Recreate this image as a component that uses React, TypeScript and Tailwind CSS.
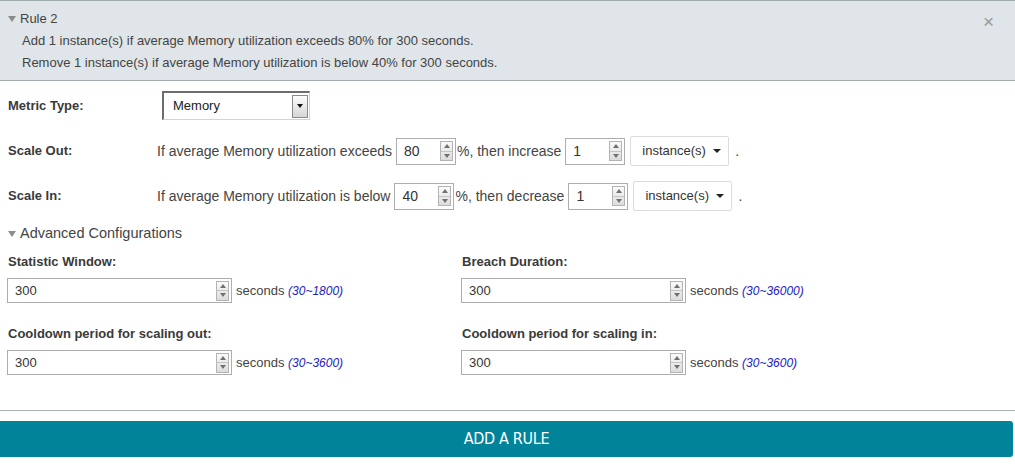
import React from "react";

const Spinner = () => (
  <div className="flex flex-col w-[13px] h-[20px] border border-[#b4b4b4] bg-gradient-to-b from-[#fafafa] to-[#dcdcdc]">
    <div className="flex-1 flex items-center justify-center border-b border-[#c4c4c4]">
      <div className="w-0 h-0 border-l-[3px] border-r-[3px] border-b-[4px] border-l-transparent border-r-transparent border-b-[#707070]" />
    </div>
    <div className="flex-1 flex items-center justify-center">
      <div className="w-0 h-0 border-l-[3px] border-r-[3px] border-t-[4px] border-l-transparent border-r-transparent border-t-[#707070]" />
    </div>
  </div>
);

const NumberBox = ({ value, width, height, size }: { value: string; width: string; height: string; size: string }) => (
  <div className={`flex items-center justify-between border border-[#adadad] bg-white pl-[7px] pr-[2px] ${width} ${height}`}>
    <span className={`${size} text-[#333]`}>{value}</span>
    <Spinner />
  </div>
);

const Caret = () => (
  <div className="w-0 h-0 border-l-[4px] border-r-[4px] border-t-[4px] border-l-transparent border-r-transparent border-t-[#222]" />
);

const UnitSelect = () => (
  <div className="flex items-center justify-between w-[99px] h-[30px] border border-[#dcdcdc] rounded-[2px] bg-white pl-[11px] pr-[7px]">
    <span className="text-[13px] text-[#333]">instance(s)</span>
    <Caret />
  </div>
);

const Hint = ({ range }: { range: string }) => (
  <span className="ml-[4px] text-[13px] text-[#444]">
    seconds <span className="italic text-[12px] text-[#2323c4]">{range}</span>
  </span>
);

const Field = ({ label, value, range }: { label: string; value: string; range: string }) => (
  <div className="flex flex-col">
    <div className="h-[18px] flex items-center pl-[1px] text-[13px] font-bold text-[#3a3a3a]">{label}</div>
    <div className="flex items-center mt-[7px]">
      <NumberBox value={value} width="w-[225px]" height="h-[25px]" size="text-[13px]" />
      <Hint range={range} />
    </div>
  </div>
);

export default function App() {
  return (
    <div className="w-[1015px] h-[465px] bg-white overflow-hidden" style={{ fontFamily: '"Liberation Sans", Arial, sans-serif' }}>
      <div className="h-[81px] bg-[#dfe5e8] border-t border-b border-[#a2acac] flex justify-between">
        <div className="pt-[9px]">
          <div className="h-[18px] flex items-center pl-[8px] text-[13px] text-[#444]">
            <div className="w-0 h-0 border-l-[4px] border-r-[4px] border-t-[6px] border-l-transparent border-r-transparent border-t-[#8c8c8c] mr-[4px]" />
            Rule 2
          </div>
          <div className="mt-[2px] pl-[22px] text-[13px] text-[#444]">
            <div className="h-[22px] flex items-center">Add 1 instance(s) if average Memory utilization exceeds 80% for 300 seconds.</div>
            <div className="h-[22px] flex items-center">Remove 1 instance(s) if average Memory utilization is below 40% for 300 seconds.</div>
          </div>
        </div>
        <div className="pt-[11px] pr-[21px] text-[19px] leading-[20px] text-[#9a9a9a]">×</div>
      </div>

      <div className="pl-[8px]">
        <div className="flex items-center h-[29px] mt-[10px]">
          <div className="w-[154px] text-[13px] font-bold text-[#3a3a3a]">Metric Type:</div>
          <div className="flex items-center justify-between w-[148px] h-[29px] border-t-2 border-l-2 border-b border-r border-t-[#6e6e6e] border-l-[#6e6e6e] border-b-[#d4d4d4] border-r-[#d4d4d4] bg-white pl-[9px] pr-[1px]">
            <span className="text-[13px] text-[#222]">Memory</span>
            <div className="flex items-center justify-center w-[16px] h-[23px] border border-[#8a8a8a] bg-gradient-to-b from-[#fdfdfd] to-[#d6d6d6]">
              <div className="w-0 h-0 border-l-[3px] border-r-[3px] border-t-[4px] border-l-transparent border-r-transparent border-t-[#111]" />
            </div>
          </div>
        </div>

        <div className="flex items-center h-[30px] mt-[16px] text-[14px] text-[#444]">
          <div className="w-[149px] text-[13px] font-bold text-[#3a3a3a]">Scale Out:</div>
          <span className="mr-[4px]">If average Memory utilization exceeds</span>
          <NumberBox value="80" width="w-[60px]" height="h-[27px]" size="text-[14px]" />
          <span className="ml-[1px] mr-[4px]">%, then increase</span>
          <NumberBox value="1" width="w-[60px]" height="h-[27px]" size="text-[14px]" />
          <div className="ml-[5px]"><UnitSelect /></div>
          <span className="ml-[6px]">.</span>
        </div>

        <div className="flex items-center h-[30px] mt-[15px] text-[14px] text-[#444]">
          <div className="w-[149px] text-[13px] font-bold text-[#3a3a3a]">Scale In:</div>
          <span className="mr-[4px]">If average Memory utilization is below</span>
          <NumberBox value="40" width="w-[60px]" height="h-[27px]" size="text-[14px]" />
          <span className="ml-[1px] mr-[4px]">%, then decrease</span>
          <NumberBox value="1" width="w-[60px]" height="h-[27px]" size="text-[14px]" />
          <div className="ml-[5px]"><UnitSelect /></div>
          <span className="ml-[6px]">.</span>
        </div>

        <div className="flex items-center h-[20px] mt-[13px] text-[14.5px] text-[#444]">
          <div className="w-0 h-0 border-l-[4px] border-r-[4px] border-t-[6px] border-l-transparent border-r-transparent border-t-[#8c8c8c] mr-[4px]" />
          Advanced Configurations
        </div>
      </div>

      <div className="grid grid-cols-[454px_1fr] pl-[7px] mt-[9px] gap-y-[22px]">
        <Field label="Statistic Window:" value="300" range="(30~1800)" />
        <Field label="Breach Duration:" value="300" range="(30~36000)" />
        <Field label="Cooldown period for scaling out:" value="300" range="(30~3600)" />
        <Field label="Cooldown period for scaling in:" value="300" range="(30~3600)" />
      </div>

      <div className="mt-[35px] border-t border-[#a9b1b1]" />
      <button className="mt-[10px] w-[1013px] h-[36px] bg-[#01839a] rounded-r-[3px] text-white text-[16px] tracking-[-0.3px]" style={{ fontFamily: '"DejaVu Sans Condensed", "DejaVu Sans", sans-serif', fontStretch: "condensed" }}>
        ADD A RULE
      </button>
    </div>
  );
}
